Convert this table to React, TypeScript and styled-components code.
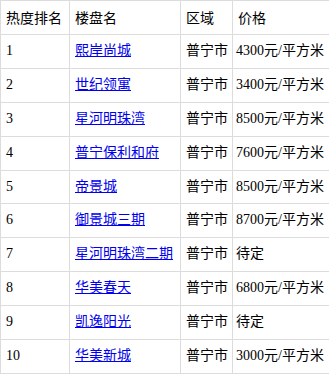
import styled, { createGlobalStyle } from "styled-components";

type Row = {
  rank: number;
  name: string;
  area: string;
  price: string;
};

const rows: Row[] = [
  { rank: 1, name: "熙岸尚城", area: "普宁市", price: "4300元/平方米" },
  { rank: 2, name: "世纪领寓", area: "普宁市", price: "3400元/平方米" },
  { rank: 3, name: "星河明珠湾", area: "普宁市", price: "8500元/平方米" },
  { rank: 4, name: "普宁保利和府", area: "普宁市", price: "7600元/平方米" },
  { rank: 5, name: "帝景城", area: "普宁市", price: "8500元/平方米" },
  { rank: 6, name: "御景城三期", area: "普宁市", price: "8700元/平方米" },
  { rank: 7, name: "星河明珠湾二期", area: "普宁市", price: "待定" },
  { rank: 8, name: "华美春天", area: "普宁市", price: "6800元/平方米" },
  { rank: 9, name: "凯逸阳光", area: "普宁市", price: "待定" },
  { rank: 10, name: "华美新城", area: "普宁市", price: "3000元/平方米" },
];

const GlobalStyle = createGlobalStyle`
  html, body {
    margin: 0;
    padding: 0;
    background: #fff;
  }
  body {
    font-family: "Liberation Serif", "Noto Sans CJK SC", serif;
    font-size: 14px;
    color: #000;
  }
`;

const Table = styled.table`
  width: 329px;
  table-layout: fixed;
  border-collapse: collapse;
`;

const Head = styled.th`
  font-weight: normal;
  text-align: left;
  white-space: nowrap;
  border: 1px solid #dcdcdc;
  padding: 6px 5px;
  line-height: 20.9px;
  font-family: "Noto Sans CJK SC", sans-serif;
`;

const Cell = styled.td<{ $tight?: boolean }>`
  white-space: nowrap;
  border: 1px solid #dcdcdc;
  padding: 6px ${(p) => (p.$tight ? "3px" : "5px")};
  line-height: 20.9px;
  overflow: visible;
`;

const Link = styled.a`
  color: #0000ee;
  text-decoration: underline;
`;

const App = () => {
  return (
    <>
      <GlobalStyle />
      <Table>
        <colgroup>
          <col style={{ width: 69 }} />
          <col style={{ width: 111 }} />
          <col style={{ width: 52 }} />
          <col style={{ width: 97 }} />
        </colgroup>
        <thead>
          <tr>
            <Head>热度排名</Head>
            <Head>楼盘名</Head>
            <Head>区域</Head>
            <Head>价格</Head>
          </tr>
        </thead>
        <tbody>
          {rows.map((row) => (
            <tr key={row.rank}>
              <Cell>{row.rank}</Cell>
              <Cell>
                <Link href="#">{row.name}</Link>
              </Cell>
              <Cell>{row.area}</Cell>
              <Cell $tight>{row.price}</Cell>
            </tr>
          ))}
        </tbody>
      </Table>
    </>
  );
};

export default App;
